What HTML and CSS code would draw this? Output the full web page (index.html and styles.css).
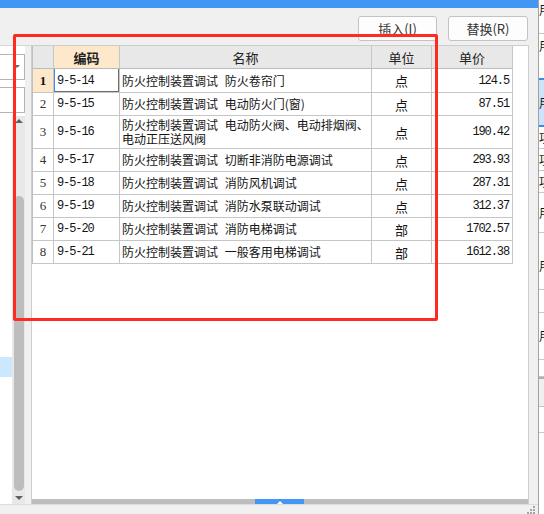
FILE: index.html
```html
<!DOCTYPE html>
<html lang="zh-CN">
<head>
<meta charset="utf-8">
<title>定额选择</title>
<link rel="stylesheet" href="styles.css">
</head>
<body>
<div class="window">
  <div class="main">
    <div class="titlebar"></div>
    <div class="toolbar">
      <button class="btn">插入(I)</button>
      <button class="btn">替换(R)</button>
    </div>
    <div class="content">
      <div class="left">
        <div class="combo"><span class="combo-arrow"></span></div>
        <div class="input"></div>
        <div class="listrow">
          <div class="list"><div class="list-sel"></div></div>
          <div class="vscroll">
            <span class="arr-up"></span>
            <div class="vthumb"></div>
            <span class="arr-down"></span>
          </div>
        </div>
      </div>
      <div class="panel">
        <div class="grid">
          <div class="c hd"></div>
          <div class="c hd hd-key">编码</div>
          <div class="c hd">名称</div>
          <div class="c hd">单位</div>
          <div class="c hd">单价</div>

          <div class="c num num-cur">1</div>
          <div class="c code cur">9-5-14</div>
          <div class="c name">防火控制装置调试 防火卷帘门</div>
          <div class="c unit">点</div>
          <div class="c price">124.5</div>

          <div class="c num">2</div>
          <div class="c code">9-5-15</div>
          <div class="c name">防火控制装置调试 电动防火门(窗)</div>
          <div class="c unit">点</div>
          <div class="c price">87.51</div>

          <div class="c num">3</div>
          <div class="c code">9-5-16</div>
          <div class="c name">防火控制装置调试 电动防火阀、电动排烟阀、电动正压送风阀</div>
          <div class="c unit">点</div>
          <div class="c price">190.42</div>

          <div class="c num">4</div>
          <div class="c code">9-5-17</div>
          <div class="c name">防火控制装置调试 切断非消防电源调试</div>
          <div class="c unit">点</div>
          <div class="c price">293.93</div>

          <div class="c num">5</div>
          <div class="c code">9-5-18</div>
          <div class="c name">防火控制装置调试 消防风机调试</div>
          <div class="c unit">点</div>
          <div class="c price">287.31</div>

          <div class="c num">6</div>
          <div class="c code">9-5-19</div>
          <div class="c name">防火控制装置调试 消防水泵联动调试</div>
          <div class="c unit">点</div>
          <div class="c price">312.37</div>

          <div class="c num">7</div>
          <div class="c code">9-5-20</div>
          <div class="c name">防火控制装置调试 消防电梯调试</div>
          <div class="c unit">部</div>
          <div class="c price">1702.57</div>

          <div class="c num">8</div>
          <div class="c code">9-5-21</div>
          <div class="c name">防火控制装置调试 一般客用电梯调试</div>
          <div class="c unit">部</div>
          <div class="c price">1612.38</div>
        </div>
        <div class="filler"></div>
        <div class="hscroll"><div class="hthumb"><span class="hthumb-arr"></span></div></div>
      </div>
    </div>
    <div class="statusbar">
      <svg class="grip" width="8" height="8" viewBox="0 0 8 8"><g fill="#a6a6a6"><rect x="6" y="0" width="2" height="2"/><rect x="3" y="3" width="2" height="2"/><rect x="6" y="3" width="2" height="2"/><rect x="0" y="6" width="2" height="2"/><rect x="3" y="6" width="2" height="2"/><rect x="6" y="6" width="2" height="2"/></g></svg>
    </div>
  </div>
  <div class="strip">
    <div class="s-row s-r1">用</div>
    <div class="s-row s-r2">用</div>
    <div class="s-row s-sel">用</div>
    <div class="s-row s-r4">项</div>
    <div class="s-row s-r4">项</div>
    <div class="s-row s-r4">项</div>
    <div class="s-row s-r5">用</div>
    <div class="s-row s-r6">用</div>
    <div class="s-row s-r7"></div>
    <div class="s-row s-r8">用</div>
    <div class="s-row s-r9"></div>
    <div class="s-row s-gray"></div>
    <div class="s-row s-r10"></div>
  </div>
  <div class="annot"></div>
</div>
</body>
</html>
```

FILE: styles.css
```css
* { box-sizing: border-box; }
html, body { margin: 0; padding: 0; }
body {
  width: 544px; height: 514px; overflow: hidden;
  background: #f0f0f0;
  font-family: "Noto Sans CJK SC", "Liberation Sans", sans-serif;
  font-size: 12px; color: #141414;
}
.window { position: relative; display: flex; width: 544px; height: 514px; }
.main { width: 538px; display: flex; flex-direction: column; }
.titlebar { height: 8px; background: #4496f4; }
.toolbar {
  height: 37px; display: flex; justify-content: flex-end; align-items: flex-start;
  gap: 11px; padding: 8px 10px 0 0;
}
.btn {
  width: 79px; height: 25px; background: #fdfdfd; border: 1px solid #c3c3c3;
  border-radius: 3px; font-family: "Noto Sans CJK SC", sans-serif; font-size: 13px;
  color: #333; padding: 0; line-height: 21px;
}
.btn + .btn { width: 80px; }
.content { height: 459px; display: flex; }
.left { width: 31px; display: flex; flex-direction: column; border-top: 1px solid #d6d6d6; background: linear-gradient(to right, #fff 25px, #f0f0f0 25px); }
.combo {
  margin-top: 8px; width: 25px; height: 26px; border: 1px solid #b4b4b4; border-left: none;
  background: #fff; position: relative;
}
.combo-arrow {
  position: absolute; left: 14px; top: 10px; width: 0; height: 0;
  border-left: 3px solid transparent; border-right: 3px solid transparent; border-top: 3px solid #6a6a6a;
}
.input { margin-top: 7px; width: 25px; height: 26px; border: 1px solid #b4b4b4; border-left: none; background: #fff; }
.listrow { margin-top: 3px; flex: 1; display: flex; width: 25px; }
.list { width: 12px; background: #fff; }
.list-sel { margin-top: 241px; height: 20px; background: #cce8ff; }
.vscroll {
  width: 13px; background: #e8e8e8; display: flex; flex-direction: column; align-items: center;
  padding: 3px 0 4px;
}
.arr-up, .arr-down { width: 0; height: 0; border-left: 4px solid transparent; border-right: 4px solid transparent; }
.arr-up { border-bottom: 4px solid #5f5f5f; }
.arr-down { border-top: 4px solid #5f5f5f; }
.vthumb { width: 10px; height: 295px; margin: 73px 0 5px; background: #bdbdbd; border-radius: 5px; }
.panel {
  width: 498px; border: 1px solid #cdcdcd; border-bottom: none; background: #fff;
  display: flex; flex-direction: column;
}
.grid {
  display: grid; width: 481px;
  grid-template-columns: 21px 66px 252px 60px 81px;
  grid-template-rows: 23px 24px 23px 33px 23px 23px 23px 23px 23px;
  border-left: 1px solid #c0c0c0;
}
.c {
  border-right: 1px solid #c6c6c6; border-bottom: 1px solid #c6c6c6;
  display: flex; align-items: center; white-space: nowrap; overflow: hidden;
}
.hd { background: #e8e8e8; justify-content: center; font-size: 13px; color: #222; border-bottom-color: #bcbcbc; }
.hd-key { background: #fde8cc; font-weight: bold; }
.num { justify-content: center; font-family: "Liberation Serif", serif; font-size: 13px; color: #333; }
.num-cur { background: #fde8cc; font-weight: bold; color: #111; }
.code, .price { font-family: "Liberation Mono", monospace; font-size: 12px; letter-spacing: -1.1px; }
.code { padding-left: 3px; }
.cur { box-shadow: inset 1px 0 0 #3c8de8, inset -1px -1px 0 #6e6e6e; }
.name { padding-left: 2px; white-space: normal; line-height: 14px; word-break: break-all; word-spacing: 4px; }
.unit { justify-content: center; font-size: 13px; }
.price { justify-content: flex-end; padding-right: 3px; }
.filler { flex: 1; }
.hscroll { height: 5px; background: #bdbdbd; display: flex; padding-left: 223px; }
.hthumb { width: 49px; height: 5px; background: #4496f4; display: flex; justify-content: center; align-items: center; }
.hthumb-arr { width: 0; height: 0; border-left: 3px solid transparent; border-right: 3px solid transparent; border-bottom: 3px solid #fff; margin-top: 1px; }
.statusbar { height: 10px; border-top: 1px solid #dcdcdc; display: flex; justify-content: flex-end; padding: 1px 3px 0 0; }
.grip { display: block; }
.strip { width: 6px; background: #fff; border-left: 1px solid #a2a2a2; overflow: hidden; display: flex; flex-direction: column; }
.s-row { border-bottom: 1px solid #c8c8c8; font-size: 12px; line-height: 12px; white-space: nowrap; display: flex; align-items: center; flex-shrink: 0; }
.s-r1 { height: 34px; align-items: flex-start; padding-top: 4px; }
.s-r2 { height: 46px; border-bottom: 2px solid #3b8ae6; align-items: flex-start; padding-top: 6px; }
.s-sel { height: 47px; background: #cce4fb; border-bottom: 2px solid #3b8ae6; }
.s-r4 { height: 22px; }
.s-r5 { height: 40px; }
.s-r6 { height: 57px; align-items: flex-start; padding-top: 27px; }
.s-r7 { height: 23px; }
.s-r8 { height: 47px; }
.s-r9 { height: 17px; }
.s-gray { height: 30px; background: #f0f0f0; border-top: 2px solid #b0b0b0; }
.s-r10 { height: 26px; }
.annot {
  position: absolute; left: 13px; top: 34px; width: 425px; height: 287px;
  border: 3px solid #ff2b20; border-radius: 2px; pointer-events: none;
}
```
